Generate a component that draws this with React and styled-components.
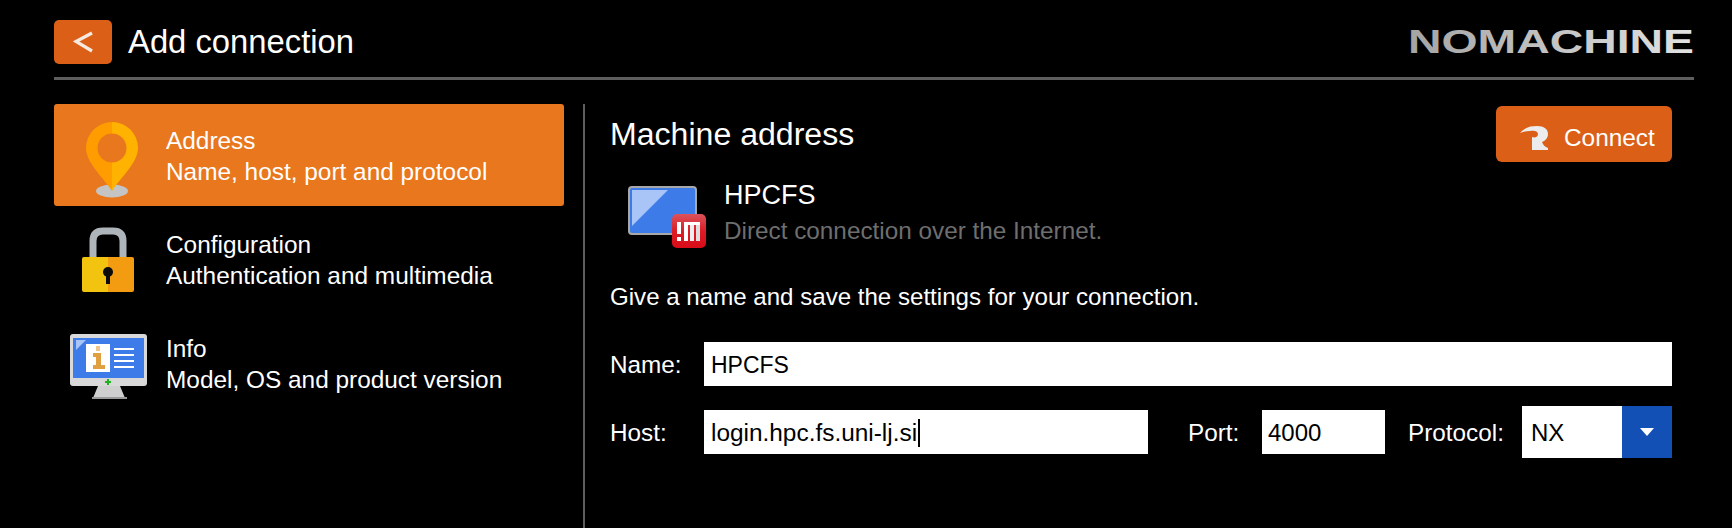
import React from "react";
import styled, { createGlobalStyle } from "styled-components";

const GlobalStyle = createGlobalStyle`
  html, body {
    margin: 0;
    background: #000;
    height: 528px;
    overflow: hidden;
  }
  body {
    font-family: "Liberation Sans", Arial, sans-serif;
    color: #fff;
  }
`;

const Page = styled.div`
  box-sizing: border-box;
  width: 1732px;
  height: 528px;
  padding: 20px 38px 0 54px;
  display: flex;
  flex-direction: column;
`;

const Header = styled.header`
  display: flex;
  align-items: center;
  height: 44px;
`;

const BackButton = styled.button`
  width: 58px;
  height: 44px;
  padding: 0;
  border: 0;
  border-radius: 5px;
  background: #dc5f17;
  display: flex;
  align-items: center;
  justify-content: center;
`;

const PageTitle = styled.h1`
  margin: 0 0 0 16px;
  font-size: 32.8px;
  font-weight: 400;
  line-height: 44px;
  flex: 1;
`;

const LogoMark = styled.svg`
  width: 286px;
  height: 28px;
  overflow: visible;
`;

const HeaderRule = styled.div`
  height: 3px;
  margin-top: 13px;
  background: #5e5e5e;
`;

const Columns = styled.div`
  flex: 1;
  display: flex;
  margin-top: 24px;
`;

const Sidebar = styled.nav`
  width: 510px;
  display: flex;
  flex-direction: column;
  gap: 2px;
`;

const NavItem = styled.div`
  height: 102px;
  display: flex;
  align-items: center;
  border-radius: 3px;
  background: ${(p) => (p.$active ? "#e8771e" : "transparent")};
`;

const NavIcon = styled.svg`
  width: 112px;
  height: 102px;
  flex: none;
`;

const NavText = styled.div`
  padding-top: 2px;
  font-size: 24.4px;
  line-height: 31px;
  white-space: nowrap;
`;

const ColumnRule = styled.div`
  width: 2px;
  margin-left: 19px;
  background: #5e5e5e;
`;

const Main = styled.main`
  flex: 1;
  padding: 2px 22px 0 25px;
`;

const MainTop = styled.div`
  display: flex;
  align-items: center;
  justify-content: space-between;
  height: 56px;
`;

const SectionTitle = styled.h2`
  margin: 0;
  font-size: 32.1px;
  font-weight: 400;
`;

const ConnectButton = styled.button`
  box-sizing: border-box;
  width: 176px;
  height: 56px;
  padding: 7px 0 0 24px;
  border: 0;
  border-radius: 6px;
  background: #dc5f17;
  color: #fff;
  font: 400 24.4px "Liberation Sans", Arial, sans-serif;
  display: flex;
  align-items: center;
  gap: 16px;
`;

const HostRow = styled.div`
  display: flex;
  margin-top: 15px;
`;

const HostIcon = styled.svg`
  width: 114px;
  height: 72px;
  flex: none;
`;

const HostName = styled.div`
  font-size: 27px;
  line-height: 36px;
`;

const HostNote = styled.div`
  font-size: 24.3px;
  line-height: 36px;
  color: #6e6e6e;
`;

const Hint = styled.p`
  margin: 33px 0 0;
  font-size: 24.1px;
  line-height: 30px;
`;

const FormRow = styled.div`
  display: flex;
  align-items: center;
  margin-top: ${(p) => p.$top}px;
`;

const Label = styled.label`
  width: ${(p) => p.$width}px;
  margin-left: ${(p) => p.$left || 0}px;
  padding-top: 2px;
  flex: none;
  font-size: 24.3px;
`;

const Field = styled.div`
  box-sizing: border-box;
  height: 44px;
  width: ${(p) => (p.$width ? `${p.$width}px` : "auto")};
  flex: ${(p) => (p.$width ? "none" : 1)};
  padding: 2px 0 0 ${(p) => p.$pad || 7}px;
  background: #fff;
  color: #000;
  font-size: ${(p) => p.$size || 24}px;
  display: flex;
  align-items: center;
`;

const Caret = styled.span`
  width: 2px;
  height: 28px;
  margin-left: 1px;
  background: #000;
`;

const Select = styled.div`
  width: 150px;
  height: 52px;
  flex: none;
  display: flex;
  background: #fff;
  color: #000;
  font-size: 24px;
  line-height: 54px;
`;

const SelectValue = styled.div`
  flex: 1;
  padding-left: 9px;
`;

const SelectArrow = styled.div`
  width: 50px;
  background: #1350b5;
  display: flex;
  align-items: center;
  justify-content: center;
`;

const ArrowDown = styled.span`
  width: 0;
  height: 0;
  border-left: 7px solid transparent;
  border-right: 7px solid transparent;
  border-top: 8px solid #fff;
`;

const Logo = () => (
  <LogoMark viewBox="0 0 286 28">
    <defs>
      <linearGradient id="logoFill" x1="0" y1="0" x2="1" y2="0">
        <stop offset="0" stopColor="#a4a4a4" />
        <stop offset="1" stopColor="#e2e2e2" />
      </linearGradient>
    </defs>
    <text
      x="0"
      y="25"
      fontFamily="Liberation Sans"
      fontWeight="700"
      fontSize="33"
      textLength="286"
      lengthAdjust="spacingAndGlyphs"
      fill="url(#logoFill)"
    >
      NOMACHINE
    </text>
  </LogoMark>
);

const PinIcon = () => (
  <NavIcon viewBox="0 0 112 102">
    <ellipse cx="58" cy="87" rx="16" ry="6.5" fill="#c4c4c4" />
    <path d="M58 18a26 26 0 0 0-26 26c0 15 18 30 26 43z" fill="#ff9d00" />
    <path d="M58 18a26 26 0 0 1 26 26c0 15-18 30-26 43z" fill="#ffb300" />
    <circle cx="58" cy="44" r="14.5" fill="#e8771e" />
  </NavIcon>
);

const LockIcon = () => (
  <NavIcon viewBox="0 0 112 102">
    <path d="M39 50V33q0-10 10-10h10q10 0 10 10v17" fill="none" stroke="#aeb5ba" strokeWidth="7" />
    <path d="M30 49h24v35H30a2 2 0 0 1-2-2V51a2 2 0 0 1 2-2z" fill="#f2c40f" />
    <path d="M54 49h24a2 2 0 0 1 2 2v31a2 2 0 0 1-2 2H54z" fill="#f39c12" />
    <circle cx="54" cy="64" r="5" fill="#0b0b0b" />
    <rect x="52" y="64" width="4" height="12" fill="#0b0b0b" />
  </NavIcon>
);

const MonitorIcon = () => (
  <NavIcon viewBox="0 0 112 102">
    <path d="M44 74h22l5 12H39z" fill="#cfcfcf" />
    <rect x="38" y="85" width="35" height="2" fill="#9a9a9a" />
    <rect x="16" y="22" width="77" height="52" rx="3" fill="#d8d8d8" />
    <rect x="19" y="26" width="71" height="40" fill="#3d7be8" />
    <path d="M22 28h10L22 38z" fill="#a9c4f7" />
    <rect x="32" y="32" width="24" height="28" fill="#fff" />
    <rect x="42" y="34" width="4" height="5" fill="#eec48a" />
    <path d="M39 41h8v12h4v4H39v-4h3v-8h-3z" fill="#e0a040" />
    <rect x="60" y="36" width="20" height="2" fill="#fff" />
    <rect x="60" y="42" width="20" height="2" fill="#fff" />
    <rect x="60" y="48" width="20" height="2" fill="#fff" />
    <rect x="60" y="54" width="20" height="2" fill="#fff" />
    <path d="M53 67h2v2h2v2h-2v2h-2v-2h-2v-2h2z" fill="#1fb31f" />
  </NavIcon>
);

const MachineIcon = () => (
  <HostIcon viewBox="0 0 114 72">
    <defs>
      <linearGradient id="badgeFill" x1="0" y1="0" x2="0" y2="1">
        <stop offset="0" stopColor="#d9535c" />
        <stop offset="0.5" stopColor="#dc1c26" />
        <stop offset="1" stopColor="#d80c18" />
      </linearGradient>
    </defs>
    <rect x="19" y="10" width="67" height="47" rx="3" fill="#3d7be8" stroke="#a8a8a8" strokeWidth="2" />
    <path d="M22 13h36L22 49z" fill="#a9c4f7" />
    <rect x="62" y="37" width="34" height="34" rx="5" fill="url(#badgeFill)" />
    <rect x="67" y="45" width="4" height="12" fill="#fff" />
    <rect x="67" y="60" width="4" height="4" fill="#fff" />
    <rect x="74" y="45" width="4" height="19" fill="#fff" />
    <rect x="80" y="45" width="4" height="19" fill="#eee" />
    <rect x="86" y="45" width="4" height="19" fill="#ddd" />
    <rect x="74" y="45" width="16" height="3" fill="#fff" />
  </HostIcon>
);

const ConnectIcon = () => (
  <svg width="28" height="24" viewBox="0 0 28 24">
    <path
      d="M0 7C5 1 11 0 17 0c7 0 11 3 11 8 0 4-3 7-6 8 1 3 3 5 6 6v2H12V11c3 1 6 0 6-3 0-3-4-4-8-3C6 5 3 6 0 7z"
      fill="#ececec"
    />
  </svg>
);

export default function App() {
  return (
    <>
      <GlobalStyle />
      <Page>
        <Header>
          <BackButton aria-label="Back">
            <svg width="20" height="22" viewBox="0 0 20 22">
              <path d="M19 2L3 10.5 19 20" fill="none" stroke="#f6e9e0" strokeWidth="3.2" />
            </svg>
          </BackButton>
          <PageTitle>Add connection</PageTitle>
          <Logo />
        </Header>
        <HeaderRule />
        <Columns>
          <Sidebar>
            <NavItem $active>
              <PinIcon />
              <NavText>
                Address
                <br />
                Name, host, port and protocol
              </NavText>
            </NavItem>
            <NavItem>
              <LockIcon />
              <NavText>
                Configuration
                <br />
                Authentication and multimedia
              </NavText>
            </NavItem>
            <NavItem>
              <MonitorIcon />
              <NavText>
                Info
                <br />
                Model, OS and product version
              </NavText>
            </NavItem>
          </Sidebar>
          <ColumnRule />
          <Main>
            <MainTop>
              <SectionTitle>Machine address</SectionTitle>
              <ConnectButton>
                <ConnectIcon />
                Connect
              </ConnectButton>
            </MainTop>
            <HostRow>
              <MachineIcon />
              <div>
                <HostName>HPCFS</HostName>
                <HostNote>Direct connection over the Internet.</HostNote>
              </div>
            </HostRow>
            <Hint>Give a name and save the settings for your connection.</Hint>
            <FormRow $top={30}>
              <Label $width={94}>Name:</Label>
              <Field $size={23}>HPCFS</Field>
            </FormRow>
            <FormRow $top={20}>
              <Label $width={94}>Host:</Label>
              <Field $width={444} $size={24.4}>
                login.hpc.fs.uni-lj.si
                <Caret />
              </Field>
              <Label $width={74} $left={40}>Port:</Label>
              <Field $width={123} $pad={6}>4000</Field>
              <Label $width={114} $left={23}>Protocol:</Label>
              <Select>
                <SelectValue>NX</SelectValue>
                <SelectArrow>
                  <ArrowDown />
                </SelectArrow>
              </Select>
            </FormRow>
          </Main>
        </Columns>
      </Page>
    </>
  );
}
